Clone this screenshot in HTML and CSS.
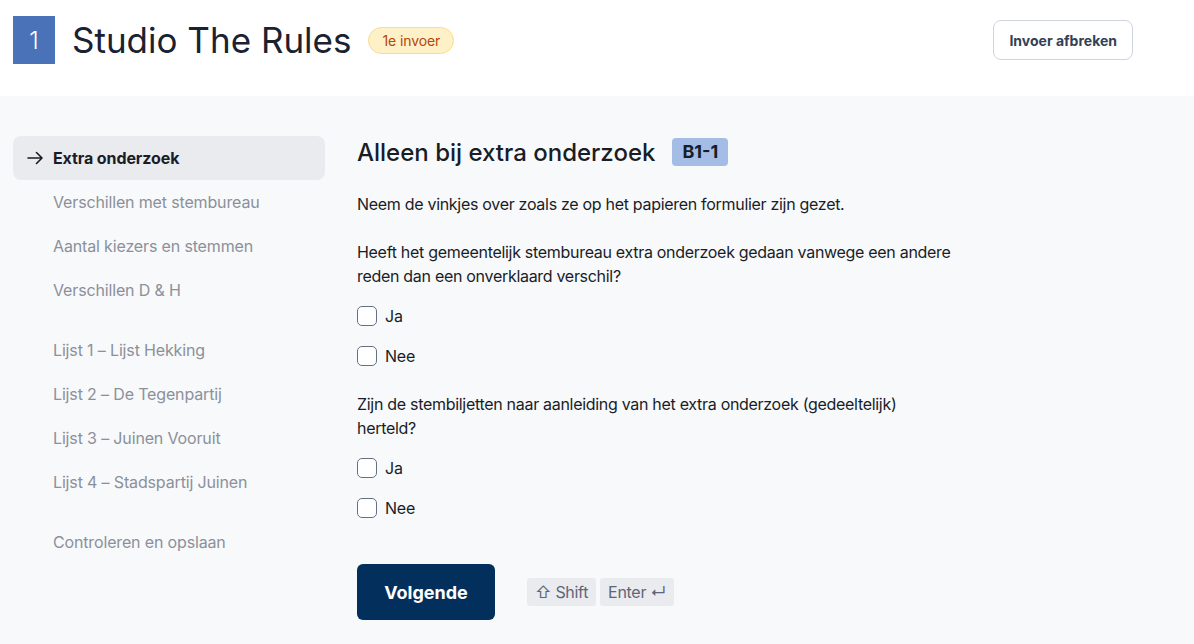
FILE: index.html
```html
<!DOCTYPE html>
<html lang="nl">
<head>
<meta charset="utf-8">
<title>Studio The Rules</title>
<link rel="stylesheet" href="styles.css">
</head>
<body>
<header class="top">
  <div class="top-left">
    <div class="num">1</div>
    <h1 class="title">Studio The Rules</h1>
    <span class="pill">1e invoer</span>
  </div>
  <button class="btn-outline">Invoer afbreken</button>
</header>
<main class="page">
  <nav class="side">
    <ul class="group">
      <li class="item active"><svg class="arrow" width="16" height="16" viewBox="0 0 16 16"><path d="M1 8H15M9.5 2.5L15 8L9.5 13.5" fill="none" stroke="#181d27" stroke-width="1.6" stroke-linecap="round" stroke-linejoin="round"/></svg>Extra onderzoek</li>
      <li class="item">Verschillen met stembureau</li>
      <li class="item">Aantal kiezers en stemmen</li>
      <li class="item">Verschillen D &amp; H</li>
    </ul>
    <ul class="group">
      <li class="item">Lijst 1 – Lijst Hekking</li>
      <li class="item">Lijst 2 – De Tegenpartij</li>
      <li class="item">Lijst 3 – Juinen Vooruit</li>
      <li class="item">Lijst 4 – Stadspartij Juinen</li>
    </ul>
    <ul class="group">
      <li class="item">Controleren en opslaan</li>
    </ul>
  </nav>
  <section class="content">
    <div class="heading">
      <h2>Alleen bij extra onderzoek</h2>
      <span class="code">B1-1</span>
    </div>
    <p class="intro">Neem de vinkjes over zoals ze op het papieren formulier zijn gezet.</p>
    <div class="question">
      <p class="q-text">Heeft het gemeentelijk stembureau extra onderzoek gedaan vanwege een andere reden dan een onverklaard verschil?</p>
      <div class="options">
        <label class="check"><span class="box"></span>Ja</label>
        <label class="check"><span class="box"></span>Nee</label>
      </div>
    </div>
    <div class="question">
      <p class="q-text">Zijn de stembiljetten naar aanleiding van het extra onderzoek (gedeeltelijk) herteld?</p>
      <div class="options">
        <label class="check"><span class="box"></span>Ja</label>
        <label class="check"><span class="box"></span>Nee</label>
      </div>
    </div>
    <div class="actions">
      <button class="btn-primary">Volgende</button>
      <div class="keys">
        <kbd>⇧ Shift</kbd>
        <kbd>Enter ↵</kbd>
      </div>
    </div>
  </section>
</main>
</body>
</html>
```
FILE: styles.css
```css
* { box-sizing: border-box; }
html, body { margin: 0; padding: 0; }
body {
  font-family: Inter, "Noto Sans", sans-serif;
  color: #181d27;
  background: #f8f9fb;
  width: 1194px;
  height: 644px;
  overflow: hidden;
}
.top {
  background: #ffffff;
  height: 96px;
  display: flex;
  align-items: center;
  justify-content: space-between;
  padding: 0 61px 0 13px;
}
.top-left {
  display: flex;
  align-items: center;
  margin-top: -16px;
}
.num {
  width: 42px;
  height: 48px;
  background: #4a72b8;
  color: #fff;
  font-size: 24px;
  font-weight: 300;
  display: flex;
  align-items: center;
  justify-content: center;
}
.title {
  margin: 0 0 0 17px;
  font-size: 35px;
  font-weight: 400;
  letter-spacing: 0;
  color: #1a2131;
}
.pill {
  margin-left: 17px;
  padding: 4px 13px;
  border-radius: 999px;
  background: #fef1c7;
  border: 1px solid #fbdc8a;
  color: #b54708;
  font-size: 14px;
  letter-spacing: -0.1px;
}
.btn-outline {
  margin-top: -16px;
  font-family: inherit;
  font-size: 14px;
  font-weight: 700;
  color: #344054;
  background: #fff;
  border: 1px solid #d0d5dd;
  border-radius: 8px;
  height: 40px;
  padding: 0 15px;
}
.page {
  display: flex;
  padding: 40px 0 0 13px;
  gap: 32px;
}
.side { width: 312px; flex: none; }
.group { list-style: none; margin: 0 0 16px; padding: 0; }
.item {
  height: 44px;
  display: flex;
  align-items: center;
  padding-left: 40px;
  font-size: 16px;
  letter-spacing: -0.15px;
  color: #8b909a;
  border-radius: 8px;
}
.item.active {
  background: #eaebef;
  color: #181d27;
  font-weight: 700;
  padding-left: 14px;
  letter-spacing: -0.1px;
}
.arrow { margin-right: 10px; flex: none; }
.content { flex: none; width: 598px; }
.heading { display: flex; align-items: center; gap: 17px; height: 32px; }
.heading h2 { margin: 0; font-size: 24px; font-weight: 500; color: #181d27; }
.code {
  background: #a3bde6;
  font-weight: 700;
  font-size: 18px;
  padding: 2px 10px;
  border-radius: 4px;
  line-height: 24px;
}
.intro { margin: 24px 0 0; font-size: 16px; line-height: 24px; letter-spacing: -0.3px; }
.question { margin-top: 24px; }
.question + .question { margin-top: 26px; }
.q-text { margin: 0 0 18px; font-size: 16px; line-height: 24px; letter-spacing: -0.3px; }
.options { display: flex; flex-direction: column; gap: 20px; }
.check {
  display: flex;
  align-items: center;
  height: 20px;
  font-size: 16px;
  letter-spacing: -0.2px;
}
.box {
  width: 20px;
  height: 20px;
  border: 1px solid #667085;
  border-radius: 5px;
  background: #fff;
  margin-right: 8px;
}
.actions { display: flex; align-items: center; margin-top: 46px; gap: 32px; }
.btn-primary {
  font-family: inherit;
  background: #032f5c;
  color: #fff;
  font-weight: 700;
  font-size: 18px;
  height: 56px;
  width: 138px;
  border: 0;
  border-radius: 6px;
}
.keys { display: flex; gap: 4px; }
kbd {
  font-family: inherit;
  font-size: 16px;
  letter-spacing: -0.3px;
  color: #5d6678;
  background: #eaebef;
  border-radius: 3px;
  height: 28px;
  padding: 0 8px;
  display: flex;
  align-items: center;
}
```
